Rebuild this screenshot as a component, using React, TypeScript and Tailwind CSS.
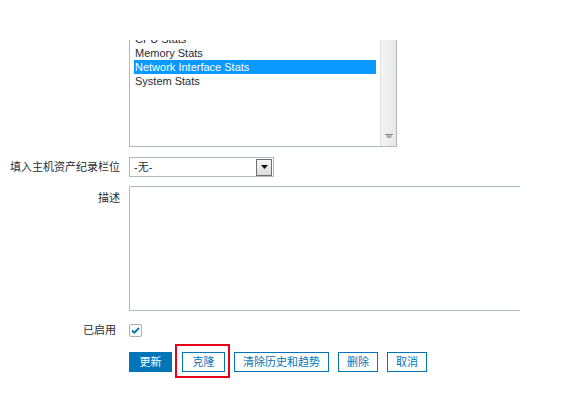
export default function App() {
  const items = ["CPU Stats", "Memory Stats", "Network Interface Stats", "System Stats"];
  const buttons = ["清除历史和趋势", "删除", "取消"];

  return (
    <div
      className="w-[566px] h-[407px] bg-white overflow-hidden text-[11px] text-[#1f2c33] pt-[40px]"
      style={{ fontFamily: '"Liberation Sans", "Noto Sans CJK SC", sans-serif' }}
    >
      <div className="grid grid-cols-[120px_1fr] gap-x-[9px]">
        {/* template list */}
        <div />
        <div className="flex h-[107px] w-[268px] overflow-hidden border-x border-b border-[#acbbc0]">
          <div className="flex-1 overflow-hidden">
            <ul className="mt-[-8px] px-[4px]">
              {items.map((it) => (
                <li
                  key={it}
                  className={
                    "h-[14px] leading-[14px] px-px " +
                    (it === "Network Interface Stats" ? "bg-[#0a99ff] text-white" : "")
                  }
                >
                  {it}
                </li>
              ))}
            </ul>
          </div>
          <div className="w-[16px] bg-gradient-to-r from-[#f4f4f4] to-[#e8e8e8] border-l border-[#e2e2e2] flex flex-col justify-end items-center pb-[7px]">
            <svg width="8" height="5" viewBox="0 0 8 5">
              <path d="M0 0h8v1H0zM1 1.5h6v1H1zM2.5 3h3v1h-3z" fill="#8a8a8a" />
            </svg>
          </div>
        </div>

        {/* inventory select */}
        <div className="mt-[10px] flex items-center justify-end whitespace-nowrap">填入主机资产纪录栏位</div>
        <div className="mt-[10px] flex h-[20px] w-[145px] items-center border border-[#acbbc0] bg-white pl-[4px] pr-px">
          <span className="flex-1">-无-</span>
          <span className="flex h-[17px] w-[16px] items-center justify-center border border-[#6f6f6f] bg-gradient-to-b from-[#f7f7f7] to-[#dcdcdc]">
            <svg width="7" height="4" viewBox="0 0 7 4">
              <path d="M0 0h7L3.5 4z" fill="#111" />
            </svg>
          </span>
        </div>

        {/* description */}
        <div className="mt-[9px] pt-[4px] text-right">描述</div>
        <div className="mt-[9px] h-[125px] w-[391px] border-y border-l border-[#acbbc0]" />

        {/* enabled */}
        <div className="mt-[13px] flex h-[13px] items-center justify-end pr-[4px]">已启用</div>
        <div className="mt-[13px]">
          <span className="flex h-[13px] w-[13px] items-center justify-center rounded-[2px] border border-[#a6b3ba] bg-white">
            <svg width="9" height="7" viewBox="0 0 9 7">
              <path d="M1 3.5l2.3 2.2L8 1" fill="none" stroke="#0275b8" strokeWidth="1.8" />
            </svg>
          </span>
        </div>

        {/* buttons */}
        <div />
        <div className="mt-[15px] flex items-center gap-[9px]">
          <button className="h-[20px] w-[43px] bg-[#0275b8] text-white border border-[#0275b8] text-[11px]">更新</button>
          <span className="relative ml-px">
            <button className="h-[20px] w-[43px] bg-white text-[#0275b8] border border-[#0275b8] text-[11px]">克隆</button>
            <span className="absolute -left-[7px] -right-[5px] -top-[8px] -bottom-[6px] border-2 border-[#e8001c]" />
          </span>
          {buttons.map((b) => (
            <button
              key={b}
              className="h-[20px] px-[8px] bg-white text-[#0275b8] border border-[#0275b8] text-[11px]"
            >
              {b}
            </button>
          ))}
        </div>
      </div>
    </div>
  );
}
